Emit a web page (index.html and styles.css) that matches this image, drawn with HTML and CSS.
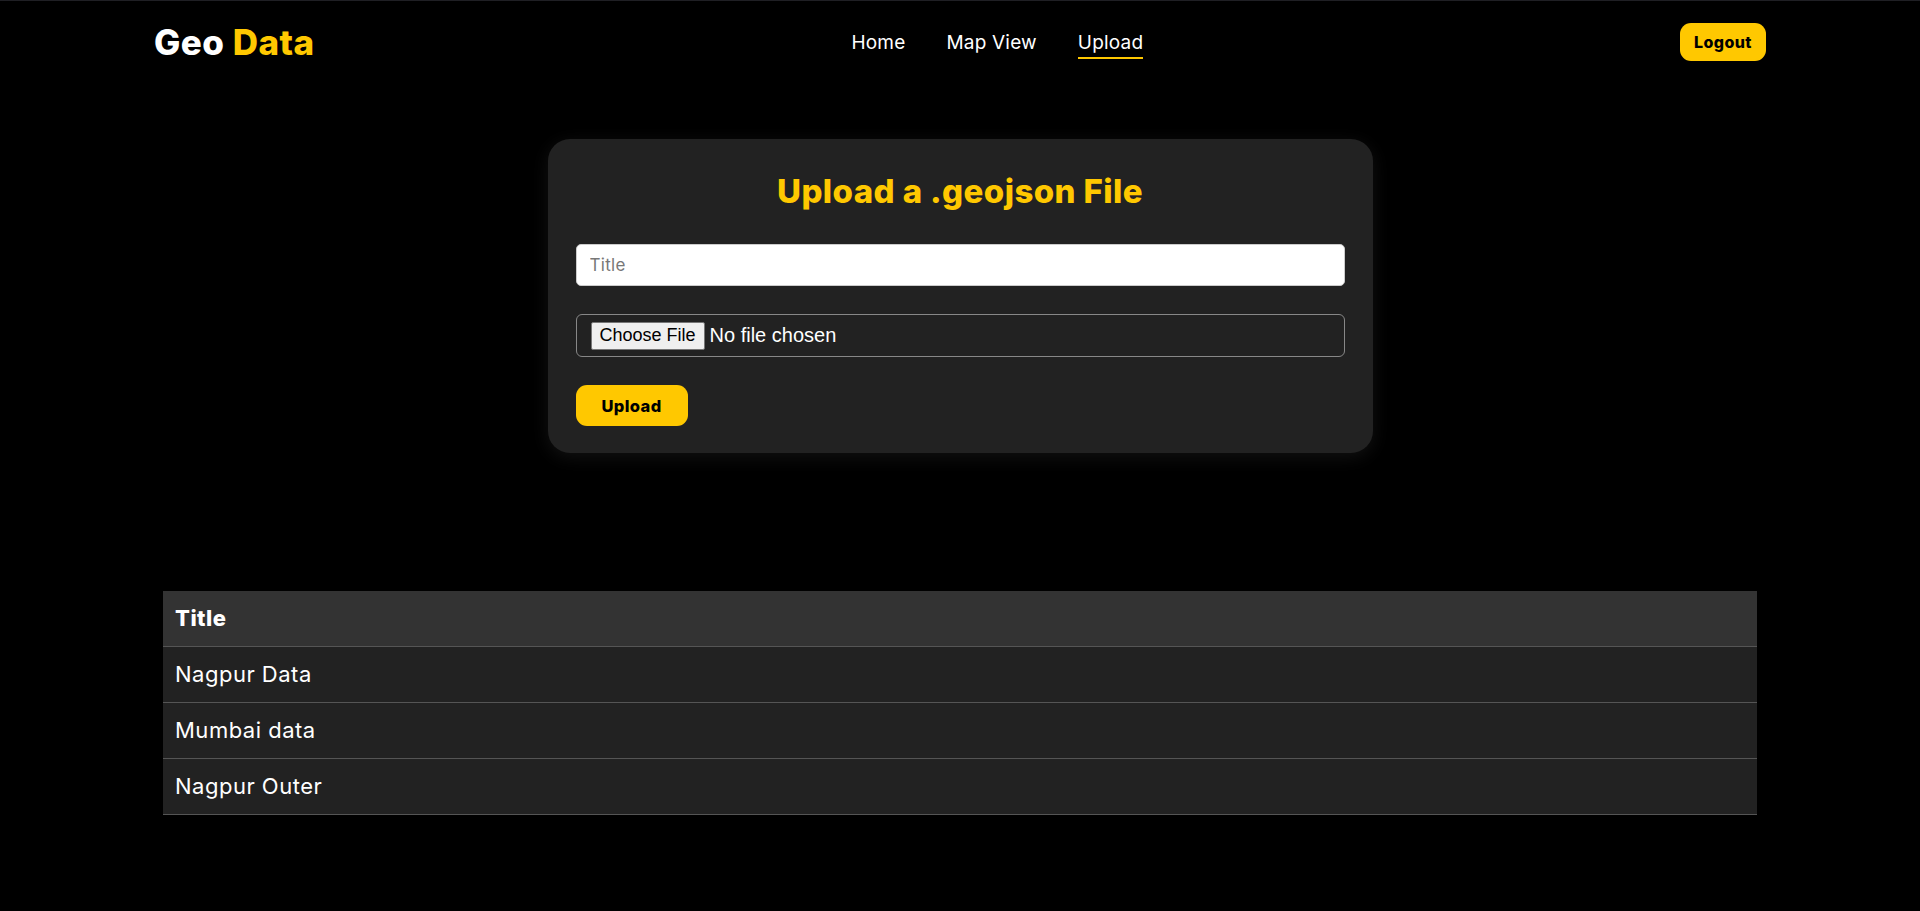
FILE: index.html
```html
<!DOCTYPE html>
<html lang="en">
<head>
<meta charset="utf-8">
<title>Geo Data - Upload</title>
<link rel="stylesheet" href="styles.css">
</head>
<body>
<header class="navbar">
  <div class="logo">Geo <span class="logo-accent">Data</span></div>
  <nav class="nav-links">
    <a class="nav-link" href="#">Home</a>
    <a class="nav-link" href="#">Map View</a>
    <a class="nav-link active" href="#">Upload</a>
  </nav>
  <button class="btn logout-btn" type="button">Logout</button>
</header>

<main class="main">
  <section class="upload-card">
    <h2 class="card-title">Upload a .geojson File</h2>
    <form class="upload-form">
      <input class="text-input" type="text" placeholder="Title">
      <div class="file-box">
        <span class="file-btn">Choose File</span>
        <span class="file-name">No file chosen</span>
      </div>
      <button class="btn upload-btn" type="button">Upload</button>
    </form>
  </section>

  <table class="data-table">
    <thead>
      <tr><th>Title</th></tr>
    </thead>
    <tbody>
      <tr><td>Nagpur Data</td></tr>
      <tr><td>Mumbai data</td></tr>
      <tr><td>Nagpur Outer</td></tr>
    </tbody>
  </table>
</main>
</body>
</html>
```

FILE: styles.css
```css
* { box-sizing: border-box; }

html, body {
  margin: 0;
  padding: 0;
  background: #000;
  color: #fff;
  font-family: "Inter", "Noto Sans", sans-serif;
}

body {
  border-top: 1px solid #1f1f24;
  min-height: 911px;
}

.navbar {
  height: 82px;
  padding: 0 154px;
  display: flex;
  align-items: center;
  justify-content: space-between;
}

.logo {
  font-size: 35px;
  font-weight: 800;
  color: #fff;
  letter-spacing: 0.5px;
  line-height: 1;
}

.logo-accent { color: #ffc800; }

.nav-links {
  display: flex;
  gap: 41px;
  align-items: center;
}

.nav-link {
  color: #fff;
  text-decoration: none;
  font-size: 19px;
  letter-spacing: 0.2px;
  line-height: 24px;
  padding-top: 6px;
  padding-bottom: 2px;
  border-bottom: 2px solid transparent;
}

.nav-link.active { border-bottom-color: #ffc800; }

.btn {
  border: none;
  background: #ffc800;
  color: #000;
  font-family: "Inter", "Noto Sans", sans-serif;
  font-weight: 800;
  cursor: pointer;
  display: flex;
  align-items: center;
  justify-content: center;
}

.logout-btn {
  width: 86px;
  height: 38px;
  border-radius: 11px;
  font-size: 16px;
  letter-spacing: 0.4px;
}

.main {
  display: flex;
  flex-direction: column;
  align-items: center;
}

.upload-card {
  width: 825px;
  margin-top: 56px;
  padding: 28px 28px 27px;
  background: #222;
  border-radius: 22px;
  box-shadow: 0 4px 18px rgba(255, 255, 255, 0.07);
}

.card-title {
  margin: 0 0 29px;
  text-align: center;
  color: #ffc800;
  font-size: 33px;
  font-weight: 800;
  letter-spacing: 0.4px;
  line-height: 48px;
}

.upload-form {
  display: flex;
  flex-direction: column;
  align-items: flex-start;
  gap: 28px;
}

.text-input {
  width: 100%;
  height: 42px;
  padding: 0 13px;
  border: 1px solid #ccc;
  border-radius: 5px;
  background: #fff;
  font-family: "Inter", "Noto Sans", sans-serif;
  font-size: 17px;
  letter-spacing: 0.3px;
  color: #333;
  outline: none;
}

.text-input::placeholder { color: #777; }

.file-box {
  width: 100%;
  height: 43px;
  padding: 0 0 0 14px;
  border: 1px solid #888;
  border-radius: 6px;
  display: flex;
  align-items: center;
  gap: 5px;
  font-family: "Liberation Sans", Arial, sans-serif;
  color: #fff;
}

.file-btn {
  height: 28px;
  padding: 0 8px;
  display: flex;
  align-items: center;
  background: #efefef;
  color: #000;
  border: 1px solid #767676;
  border-radius: 2px;
  font-size: 18px;
}

.file-name { font-size: 20px; }

.upload-btn {
  width: 112px;
  height: 41px;
  border-radius: 11px;
  font-size: 16.5px;
  letter-spacing: 0.4px;
}

.data-table {
  width: 1594px;
  margin-top: 138px;
  border-collapse: collapse;
  text-align: left;
}

.data-table th,
.data-table td {
  padding: 0 12px;
  height: 56px;
  font-size: 22px;
  letter-spacing: 0.5px;
  border-bottom: 1px solid #555;
}

.data-table th {
  background: #333;
  font-weight: 800;
  height: 55px;
}

.data-table td {
  background: #222;
  font-weight: 400;
}
```
